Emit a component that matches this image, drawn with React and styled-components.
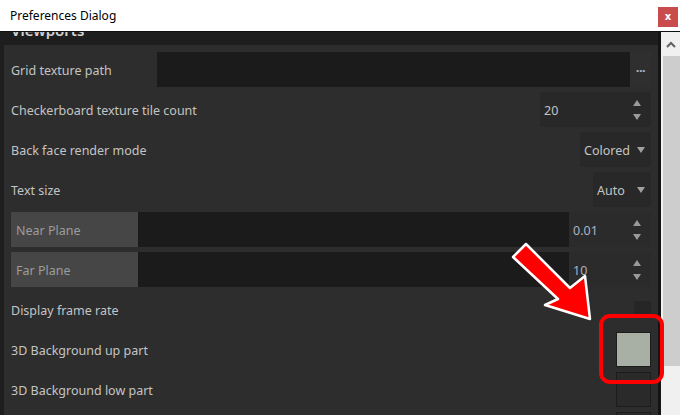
import React from "react";
import styled, { createGlobalStyle } from "styled-components";

const Global = createGlobalStyle`
  html, body { margin: 0; padding: 0; background: #ffffff; }
  body { font-family: "Noto Sans", "Open Sans", sans-serif; }
  * { box-sizing: border-box; }
`;

const Window = styled.div`
  position: relative;
  width: 680px;
  height: 415px;
  overflow: hidden;
  display: flex;
  flex-direction: column;
  background: #ffffff;
`;

const TitleBar = styled.div`
  height: 32px;
  flex: none;
  display: flex;
  align-items: flex-start;
  justify-content: space-between;
  background: #ffffff;
  border-bottom: 1px solid #101010;
  position: relative;
  z-index: 2;
`;

const Title = styled.div`
  padding: 8px 0 0 10px;
  font-size: 12px;
  line-height: 16px;
  color: #000000;
`;

const CloseButton = styled.div`
  margin: 7px 2px 0 0;
  width: 20px;
  height: 20px;
  background: #c94b4c;
  color: #ffffff;
  font-family: "DejaVu Sans", sans-serif;
  font-weight: bold;
  font-size: 10px;
  line-height: 19px;
  text-align: center;
`;

const Body = styled.div`
  flex: 1;
  display: flex;
  min-height: 0;
`;

const Content = styled.div`
  width: 661px;
  flex: none;
  background: #1e1e1e;
  overflow: hidden;
  display: flex;
  flex-direction: column;
  border-right: 3px solid #141414;
`;

const SectionHeader = styled.div`
  margin-top: -12px;
  height: 25px;
  flex: none;
  padding-left: 11px;
  font-size: 15px;
  line-height: 20px;
  font-weight: 600;
  color: #d4d4d4;
`;

const Panel = styled.div`
  margin-left: 4px;
  flex: 1;
  background: #2d2d2d;
  padding: 7px 7px 0 7px;
  display: flex;
  flex-direction: column;
  gap: 5px;
`;

const Row = styled.div`
  height: 35px;
  flex: none;
  display: flex;
  align-items: center;
`;

const Label = styled.div`
  flex: ${(p) => (p.$width ? "none" : "1")};
  width: ${(p) => (p.$width ? `${p.$width}px` : "auto")};
  padding-top: 2px;
  font-size: 12.5px;
  color: #c4c4c4;
  white-space: nowrap;
`;

const DarkInput = styled.div`
  flex: 1;
  height: 35px;
  background: #1b1b1b;
`;

const BrowseButton = styled.div`
  width: 21px;
  height: 35px;
  background: #2f2f2f;
  color: #a8b2c4;
  font-size: 13px;
  font-weight: bold;
  line-height: 14px;
  padding-top: 8px;
  text-align: center;
  letter-spacing: -0.5px;
`;

const Field = styled.div`
  width: ${(p) => p.$width}px;
  flex: none;
  height: 35px;
  background: ${(p) => p.$bg || "#282828"};
  display: flex;
  align-items: center;
  justify-content: space-between;
  padding: 0 6px 0 4px;
  font-size: 12.5px;
  color: ${(p) => p.$color || "#c4c4c4"};
`;

const FieldText = styled.span`
  padding-top: 2px;
`;

const Arrows = styled.div`
  display: flex;
  flex-direction: column;
  gap: 8px;
  padding-right: 4px;
  padding-top: 1px;
`;

const PlaneLabel = styled.div`
  width: 127px;
  height: 35px;
  flex: none;
  background: #464646;
  padding-left: 5px;
  font-size: 12.5px;
  line-height: 37px;
  color: #9c9c9c;
`;

const CheckBox = styled.div`
  width: 17px;
  height: 17px;
  background: #262626;
`;

const Swatch = styled.div`
  width: 35px;
  height: 35px;
  flex: none;
  border: 1px solid #1c1c1c;
  background: ${(p) => p.$color};
`;

const Scrollbar = styled.div`
  flex: 1;
  background: #f0f0f0;
  display: flex;
  flex-direction: column;
  padding-left: 2px;
`;

const ScrollUp = styled.div`
  height: 24px;
  display: flex;
  align-items: center;
  justify-content: center;
  padding-right: 2px;
`;

const Thumb = styled.div`
  height: 310px;
  background: #cdcdcd;
`;

const Overlay = styled.svg`
  position: absolute;
  left: 0;
  top: 0;
  pointer-events: none;
  z-index: 3;
`;

const Up = () => (
  <svg width="8" height="6" viewBox="0 0 8 6">
    <polygon points="4,0 8,6 0,6" fill="#9a9a9a" />
  </svg>
);
const Down = ({ color = "#9a9a9a" }) => (
  <svg width="8" height="6" viewBox="0 0 8 6">
    <polygon points="0,0 8,0 4,6" fill={color} />
  </svg>
);

const Spin = () => (
  <Arrows>
    <Up />
    <Down />
  </Arrows>
);

export default function App() {
  return (
    <>
      <Global />
      <Window>
        <TitleBar>
          <Title>Preferences Dialog</Title>
          <CloseButton>x</CloseButton>
        </TitleBar>
        <Body>
          <Content>
            <SectionHeader>Viewports</SectionHeader>
            <Panel>
              <Row>
                <Label $width={146}>Grid texture path</Label>
                <DarkInput />
                <BrowseButton>...</BrowseButton>
              </Row>
              <Row>
                <Label>Checkerboard texture tile count</Label>
                <Field $width={111}>
                  <FieldText>20</FieldText>
                  <Spin />
                </Field>
              </Row>
              <Row>
                <Label>Back face render mode</Label>
                <Field $width={71}>
                  <FieldText>Colored</FieldText>
                  <Down color="#a0a0a0" />
                </Field>
              </Row>
              <Row>
                <Label>Text size</Label>
                <Field $width={58}>
                  <FieldText>Auto</FieldText>
                  <Down color="#a0a0a0" />
                </Field>
              </Row>
              <Row>
                <PlaneLabel>Near Plane</PlaneLabel>
                <DarkInput />
                <Field $width={82} $bg="#2b2b2b" $color="#aab3c2">
                  <FieldText>0.01</FieldText>
                  <Spin />
                </Field>
              </Row>
              <Row>
                <PlaneLabel>Far Plane</PlaneLabel>
                <DarkInput />
                <Field $width={82} $bg="#2b2b2b" $color="#aab3c2">
                  <FieldText>10</FieldText>
                  <Spin />
                </Field>
              </Row>
              <Row>
                <Label>Display frame rate</Label>
                <CheckBox />
              </Row>
              <Row>
                <Label>3D Background up part</Label>
                <Swatch $color="#a8b0a5" />
              </Row>
              <Row>
                <Label>3D Background low part</Label>
                <Swatch $color="#2a2a2a" />
              </Row>
              <Row>
                <Label />
                <Swatch $color="#2a2a2a" />
              </Row>
            </Panel>
          </Content>
          <Scrollbar>
            <ScrollUp>
              <svg width="10" height="7" viewBox="0 0 10 7">
                <polyline points="1,6 5,2 9,6" fill="none" stroke="#606060" strokeWidth="2" />
              </svg>
            </ScrollUp>
            <Thumb />
          </Scrollbar>
        </Body>
        <Overlay width="680" height="415" viewBox="0 0 680 415">
          <rect x="601" y="316" width="61" height="66" rx="9" ry="9" fill="none" stroke="#ff0000" strokeWidth="4" />
          <polygon
            points="513,257 526,244 570,288 585,276 590,319 545,305 558,299"
            fill="#ff0000"
            stroke="#ffffff"
            strokeWidth="2.5"
            strokeLinejoin="round"
          />
        </Overlay>
      </Window>
    </>
  );
}
